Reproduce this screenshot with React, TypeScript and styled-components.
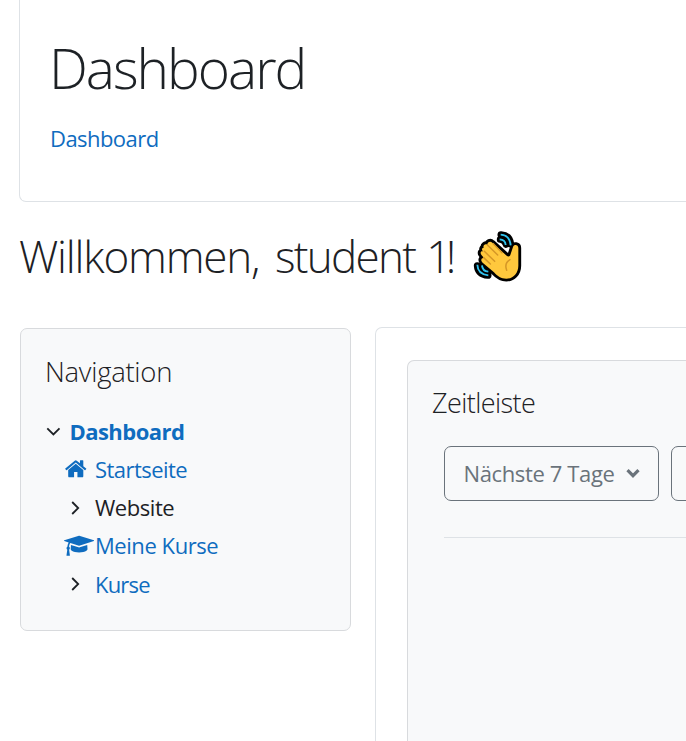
import React from 'react';
import styled, { createGlobalStyle } from 'styled-components';

const GlobalStyle = createGlobalStyle`
  *, *::before, *::after { box-sizing: border-box; }
  html, body { margin: 0; padding: 0; background: #fff; overflow: hidden; }
  body {
    font-family: "Open Sans", "Noto Sans", sans-serif;
    font-size: 22px;
    color: #1d2125;
  }
`;

const Page = styled.div`
  width: 686px;
  height: 741px;
  overflow: hidden;
  display: flex;
  flex-direction: column;
`;

const HeaderCard = styled.header`
  flex: none;
  height: 202px;
  margin-left: 19px;
  padding: 35px 0 0 30px;
  border: solid #dee2e6;
  border-width: 0 0 1px 1px;
  border-radius: 0 0 0 7px;
`;

const Title = styled.h1`
  margin: 0 0 20px -1px;
  font-size: 55px;
  font-weight: 300;
  line-height: 66px;
  letter-spacing: -2px;
`;

const Link = styled.a<{ $bold?: boolean; $spacing?: number }>`
  color: #0f6cbf;
  text-decoration: none;
  line-height: inherit;
  font-weight: ${(p) => (p.$bold ? 700 : 400)};
  letter-spacing: ${(p) => p.$spacing ?? -0.55}px;
`;

const Breadcrumb = styled.nav`
  line-height: 34px;
`;

const Welcome = styled.h2`
  flex: none;
  display: flex;
  align-items: center;
  height: 54px;
  margin: 27px 0 44px 19px;
  font-size: 44px;
  font-weight: 300;
  line-height: 54px;
  white-space: nowrap;
`;

const WelcomeText = styled.span`
  width: 454px;
`;

const Word = styled.span<{ $spacing: number }>`
  letter-spacing: ${(p) => p.$spacing}px;
`;

const WaveIcon = styled.svg`
  flex: none;
  width: 50px;
  height: 52px;
  margin-top: 2px;
`;

const Columns = styled.div`
  flex: 1;
  display: flex;
  align-items: flex-start;
  padding-left: 20px;
`;

const Block = styled.section`
  background: #f8f9fa;
  border: 1px solid #d8dadd;
  border-radius: 7px;
`;

const NavBlock = styled(Block)`
  flex: none;
  width: 331px;
  height: 303px;
  margin: 1px 24px 0 0;
  padding: 26px 25px 0 24px;
`;

const BlockTitle = styled.h5<{ $size: number; $spacing: number }>`
  margin: 0;
  font-size: ${(p) => p.$size}px;
  font-weight: 300;
  line-height: 34px;
  letter-spacing: ${(p) => p.$spacing}px;
`;

const Tree = styled.ul`
  margin: 23px 0 0 1px;
  padding: 0;
  list-style: none;
`;

const TreeItem = styled.li<{ $root?: boolean }>`
  display: flex;
  align-items: center;
  height: 38.14px;
  line-height: 38px;
  padding-left: ${(p) => (p.$root ? 0 : 18)}px;
`;

const IconCell = styled.span<{ $width: number; $indent?: number }>`
  flex: none;
  display: flex;
  align-items: center;
  width: ${(p) => p.$width}px;
  padding-left: ${(p) => p.$indent ?? 0}px;
  color: #0f6cbf;
`;

const Plain = styled.span`
  letter-spacing: -0.45px;
`;

const Main = styled.main`
  flex: 1;
  align-self: stretch;
  padding: 32px 0 0 31px;
  border: solid #dee2e6;
  border-width: 1px 0 0 1px;
  border-radius: 7px 0 0 0;
`;

const Timeline = styled(Block)`
  height: 100%;
  padding: 25px 0 0 24px;
  border-width: 1px 0 0 1px;
  border-radius: 7px 0 0 0;
  overflow: hidden;
`;

const Filters = styled.div`
  display: flex;
  gap: 12px;
  margin: 26px 0 0 12px;
  padding-bottom: 36px;
  border-bottom: 1px solid #dee2e6;
`;

const FilterButton = styled.button`
  flex: none;
  display: flex;
  align-items: center;
  justify-content: space-between;
  width: 215px;
  height: 55px;
  padding: 0 18px 2px 18.5px;
  border: 1px solid #6a737b;
  border-radius: 7px;
  background: transparent;
  color: #6a737b;
  font: inherit;
  letter-spacing: -0.37px;
  white-space: nowrap;
`;

const Stroke = styled.svg<{ $color: string; $weight: number }>`
  flex: none;
  fill: none;
  stroke: ${(p) => p.$color};
  stroke-width: ${(p) => p.$weight};
`;

const ChevronRight = () => (
  <Stroke $color="#1d2125" $weight={1.8} width="9" height="15" viewBox="0 0 9 15">
    <path d="M1.2 2 7.2 8l-6 6" />
  </Stroke>
);

const HomeIcon = () => (
  <svg width="23.5" height="23.5" viewBox="0 0 1792 1792" fill="currentColor">
    <path d="M1472 992v480q0 26-19 45t-45 19h-384v-384H768v384H384q-26 0-45-19t-19-45V992q0-1 .5-3t.5-3l575-474 575 474q1 2 1 6zm223-69-62 74q-8 9-21 11h-3q-13 0-21-7L896 424l-692 577q-12 8-24 7-13-2-21-11l-62-74q-8-10-7-23.5t11-21.5l719-599q32-26 76-26t76 26l244 204V288q0-14 9-23t23-9h192q14 0 23 9t9 23v408l219 182q10 8 11 21.5t-7 23.5z" />
  </svg>
);

const CapIcon = () => (
  <svg width="30.2" height="23.5" viewBox="0 0 2304 1792" fill="currentColor">
    <path d="M1774 836l18 316q4 69-82 128t-235 93.5-323 34.5-323-34.5-235-93.5-82-128l18-316 574 181q22 7 48 7t48-7zm530-324q0 23-22 31L1162 895q-4 1-10 1t-10-1L490 689q-43 34-71 111.5T385 979q63 36 63 109 0 69-58 107l58 433q2 14-8 25-9 11-24 11H224q-15 0-24-11-10-11-8-25l58-433q-58-38-58-107 0-73 65-111 11-207 98-330L22 543Q0 535 0 512t22-31L1142 129q4-1 10-1t10 1l1120 352q22 8 22 31z" />
  </svg>
);

const handPath =
  'M56 76C53 68 61 63 67 67C67 59 76 55 82 61L125 100C129 104 134 103 136 98L144 74C147 65 160 67 160 77L160 130C160 153 144 169 124 169C108 169 98 162 87 150L53 121C45 113 50 105 57 107L50 99C43 90 49 84 55 88C49 82 50 77 56 76Z';

const Wave = () => (
  <WaveIcon viewBox="24 26 150 156" fill="none" strokeLinecap="round" strokeLinejoin="round">
    <g stroke="#000" strokeWidth="21">
      <path d="M108 37q26 2 29 28M106 51q14 2 17 15M37 130q2 26 32 29M51 130q2 15 18 19" />
    </g>
    <path d={handPath} fill="#000" stroke="#000" strokeWidth="17" />
    <g stroke="#30c3ef" strokeWidth="5.5" strokeLinecap="butt">
      <path d="M107 37q27 1 30 32M104 51q17 1 18 17M37 127q1 28 33 32M51 129q1 17 19 19" />
    </g>
    <path d={handPath} fill="#ffc83d" />
    <path
      d="M68 69 98 98M85 64l26 27M58 87l31 30M56 106l20 19M135 112q-18 10-10 32"
      stroke="#d59727"
      strokeWidth="4.5"
    />
  </WaveIcon>
);

export default function App() {
  return (
    <>
      <GlobalStyle />
      <Page>
        <HeaderCard>
          <Title>Dashboard</Title>
          <Breadcrumb>
            <Link>Dashboard</Link>
          </Breadcrumb>
        </HeaderCard>
        <Welcome>
          <WelcomeText>
            <Word $spacing={-1.2}>Willkommen,</Word>
            <Word $spacing={4.2}> </Word>
            <Word $spacing={-1.7}>student</Word>
            <Word $spacing={-0.5}> </Word>
            <Word $spacing={-5.5}>1!</Word>
          </WelcomeText>
          <Wave />
        </Welcome>
        <Columns>
          <NavBlock>
            <BlockTitle $size={27.5} $spacing={-0.28}>Navigation</BlockTitle>
            <Tree>
              <TreeItem $root>
                <IconCell $width={23.5}>
                  <Stroke $color="#1d2125" $weight={1.8} width="15" height="9" viewBox="0 0 15 9">
                    <path d="M1.3 1.3 7.4 7.5l6.1-6.2" />
                  </Stroke>
                </IconCell>
                <Link $bold>Dashboard</Link>
              </TreeItem>
              <TreeItem>
                <IconCell $width={31}><HomeIcon /></IconCell>
                <Link>Startseite</Link>
              </TreeItem>
              <TreeItem>
                <IconCell $width={31} $indent={6.5}><ChevronRight /></IconCell>
                <Plain>Website</Plain>
              </TreeItem>
              <TreeItem>
                <IconCell $width={31}><CapIcon /></IconCell>
                <Link $spacing={-0.44}>Meine Kurse</Link>
              </TreeItem>
              <TreeItem>
                <IconCell $width={31} $indent={6.5}><ChevronRight /></IconCell>
                <Link $spacing={-0.8}>Kurse</Link>
              </TreeItem>
            </Tree>
          </NavBlock>
          <Main>
            <Timeline>
              <BlockTitle $size={27} $spacing={-0.58}>Zeitleiste</BlockTitle>
              <Filters>
                <FilterButton>
                  Nächste 7 Tage
                  <Stroke $color="#6a737b" $weight={3.2} width="14" height="10" viewBox="0 0 14 10">
                    <path d="M1.5 2.2 7 7.7l5.5-5.5" />
                  </Stroke>
                </FilterButton>
                <FilterButton />
              </Filters>
            </Timeline>
          </Main>
        </Columns>
      </Page>
    </>
  );
}
